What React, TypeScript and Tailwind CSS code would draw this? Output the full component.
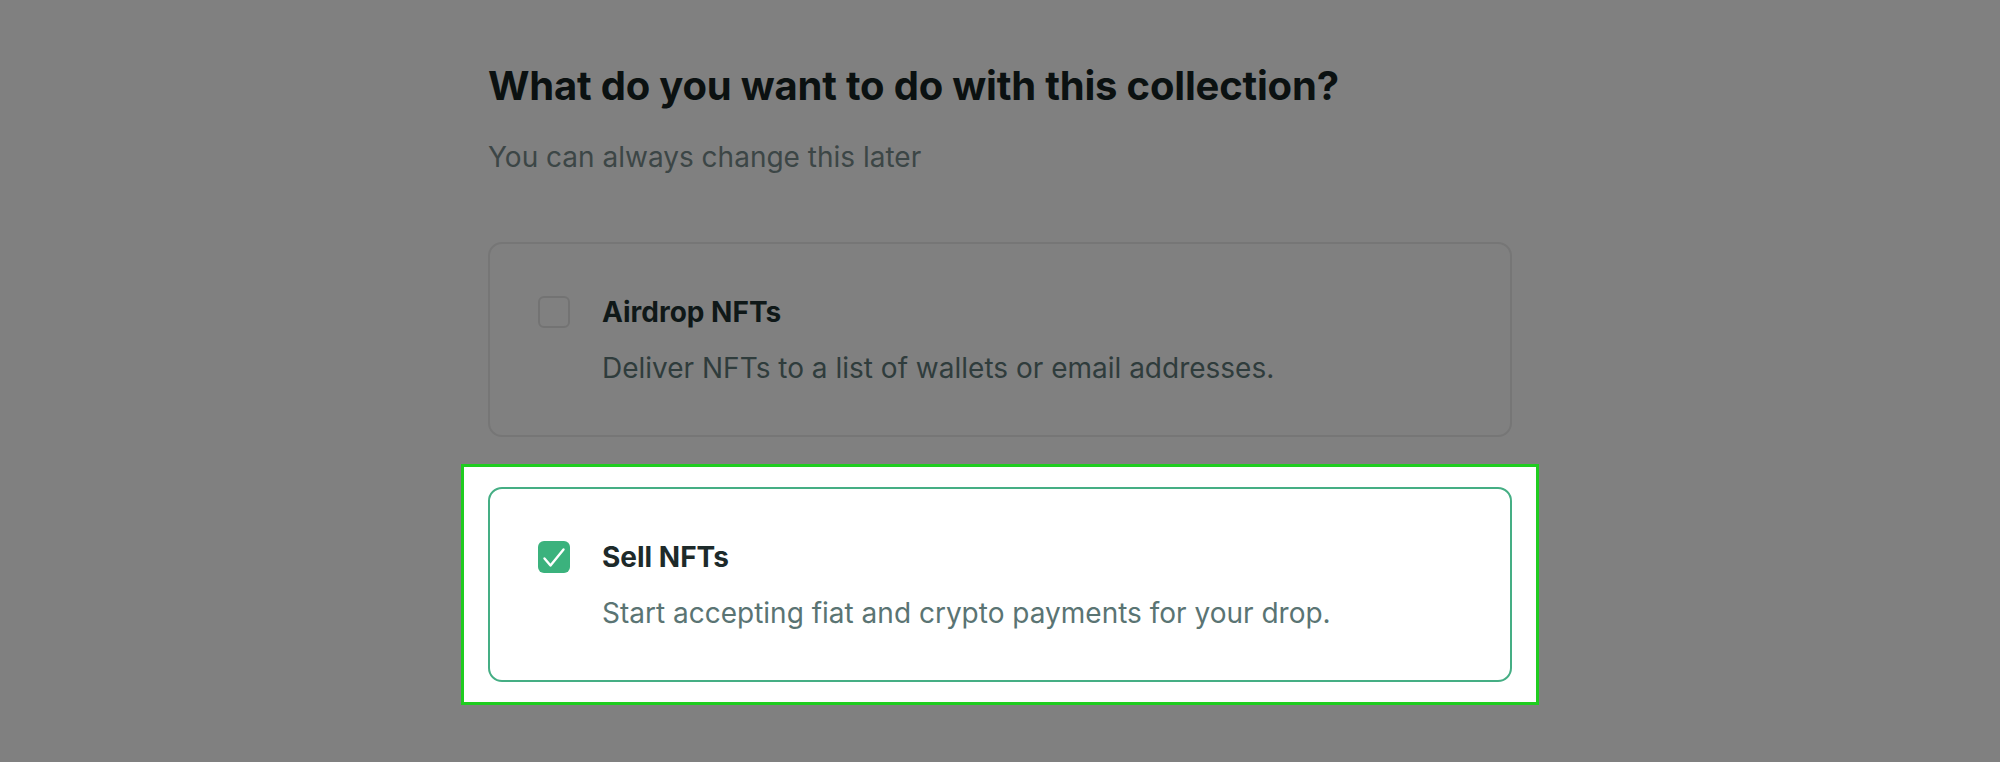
import React from "react";

function Check() {
  return (
    <svg width="32" height="32" viewBox="0 0 32 32" fill="none">
      <path d="M6.5 17.5 L12.5 24.5 L25.5 8.5" stroke="white" strokeWidth="2.4" strokeLinecap="round" strokeLinejoin="round" />
    </svg>
  );
}

export default function App() {
  return (
    <div className="min-h-[762px] w-full bg-[#808080] font-['Inter',sans-serif] overflow-hidden">
      <div className="mx-auto w-[1024px] pt-[62px]">
        <h1 className="text-[40px] leading-[48px] font-bold text-[#0b1111] tracking-[-0.2px]">
          What do you want to do with this collection?
        </h1>
        <p className="mt-[29px] text-[28px] leading-[36px] text-[#3c4646]">
          You can always change this later
        </p>

        <div className="mt-[67px] flex flex-col">
          <div className="rounded-[14px] border-2 border-[#767676] px-12 pt-[50px] pb-[49px]">
            <div className="flex items-center gap-8">
              <div className="h-8 w-8 shrink-0 rounded-[6px] border-2 border-[#737373]" />
              <div className="text-[28px] leading-[36px] font-bold text-[#0f1818]">Airdrop NFTs</div>
            </div>
            <p className="mt-[20px] pl-16 text-[28px] leading-[36px] text-[#2f3c3c]">
              Deliver NFTs to a list of wallets or email addresses.
            </p>
          </div>

          <div className="mt-[27px] -mx-[27px] border-[3px] border-[#1fcc1f] bg-white px-6 pt-5 pb-5">
            <div className="rounded-[14px] border-2 border-[#45ae84] px-12 pt-[50px] pb-[49px]">
              <div className="flex items-center gap-8">
                <div className="flex h-8 w-8 shrink-0 items-center justify-center rounded-[6px] bg-[#3bb27d]">
                  <Check />
                </div>
                <div className="text-[28px] leading-[36px] font-bold text-[#1d2a2a]">Sell NFTs</div>
              </div>
              <p className="mt-[20px] pl-16 text-[28px] leading-[36px] text-[#5a7473]">
                Start accepting fiat and crypto payments for your drop.
              </p>
            </div>
          </div>
        </div>
      </div>
    </div>
  );
}
